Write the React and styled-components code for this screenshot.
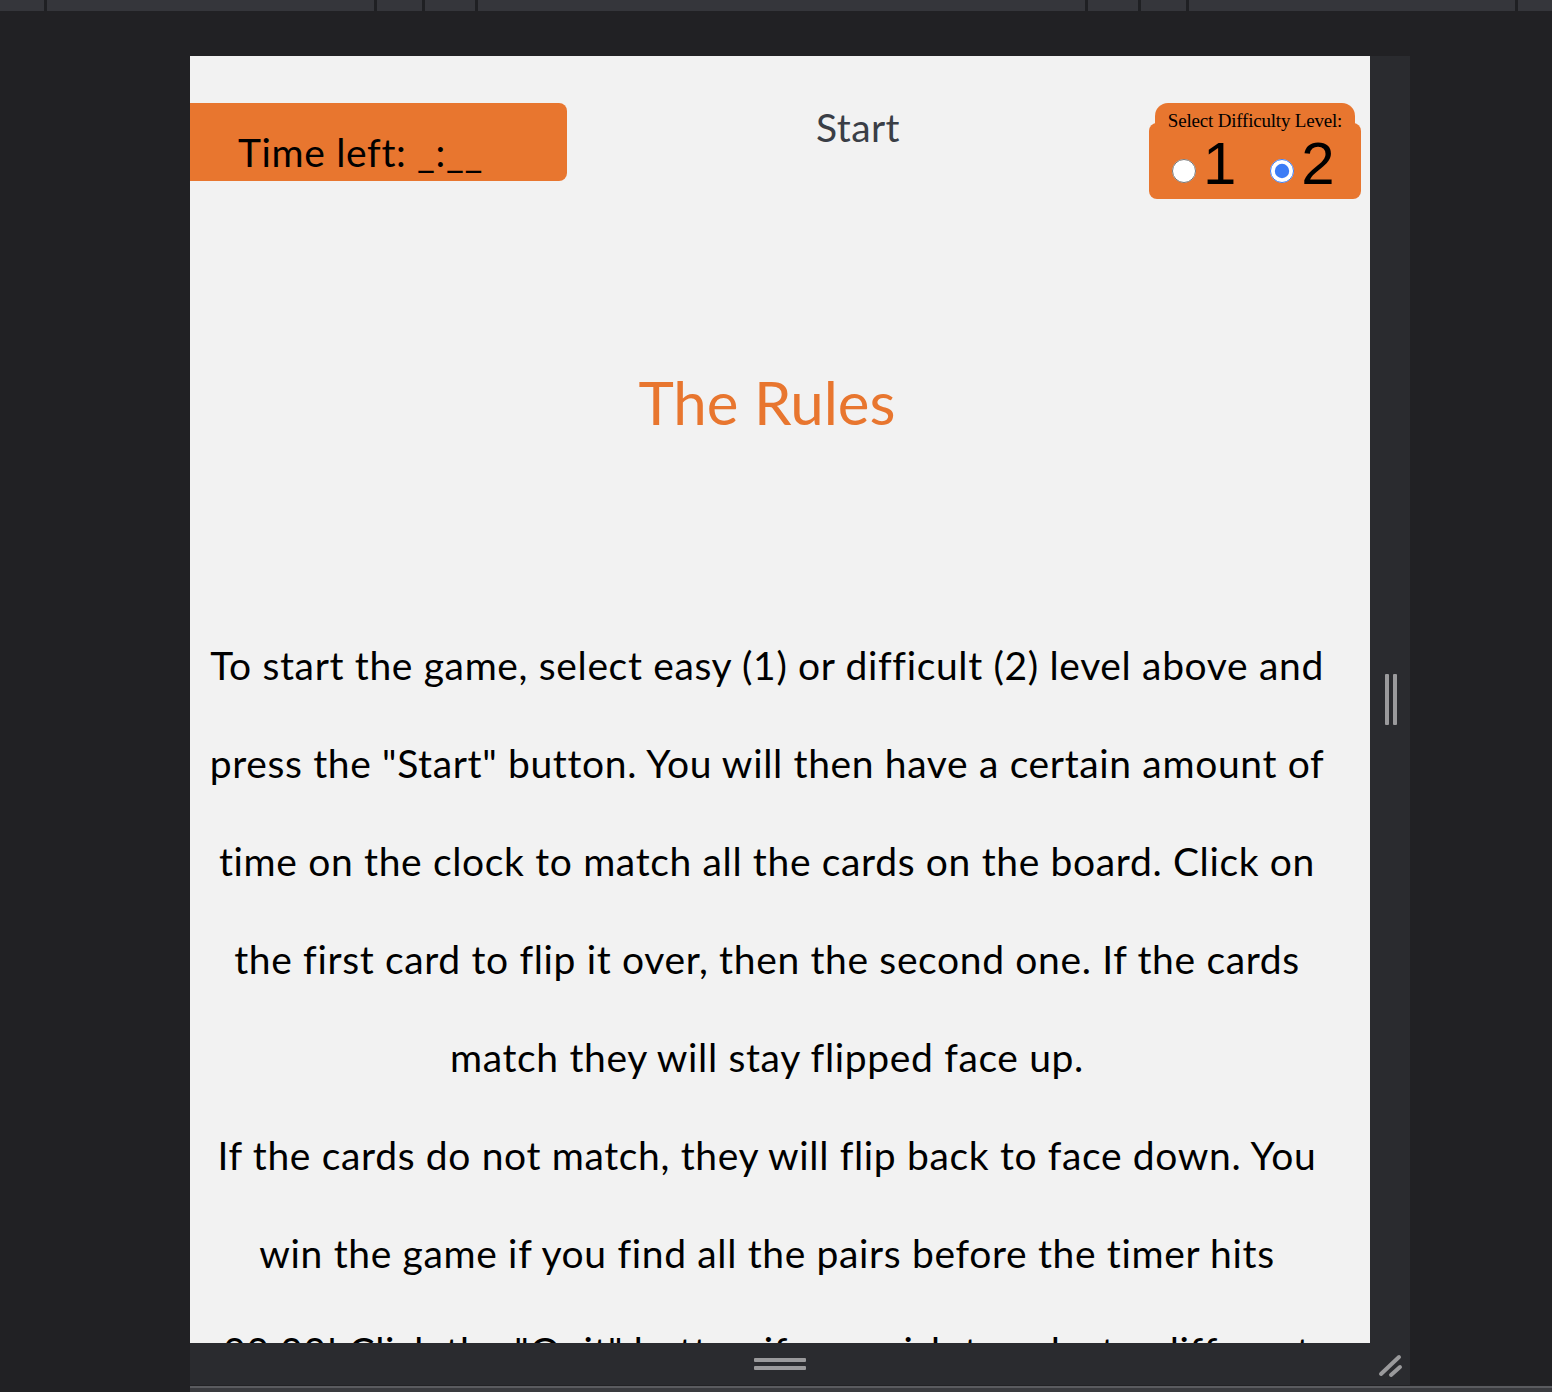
import React from "react";
import styled, { createGlobalStyle } from "styled-components";

const GlobalStyle = createGlobalStyle`
  html, body {
    margin: 0;
    padding: 0;
    background: #212124;
  }
  #root {
    min-height: 100vh;
  }
`;

const orange = "#e8762f";

const Screen = styled.div`
  width: 1552px;
  height: 1392px;
  background: #212124;
  display: flex;
  flex-direction: column;
  overflow: hidden;
`;

const TabStrip = styled.div`
  display: flex;
  height: 11px;
  background: #35363b;
  flex-shrink: 0;
`;

const Tab = styled.div`
  width: ${(p) => p.$w}px;
  height: 100%;
  border-right: 3px solid #1f2023;
  box-sizing: border-box;
  flex-shrink: 0;
`;

const Stage = styled.div`
  flex: 1;
  display: flex;
  flex-direction: column;
  padding: 45px 0 0 190px;
`;

const Frame = styled.div`
  width: 1220px;
  height: 1329px;
  display: flex;
  flex-direction: column;
  background: #2a2b2f;
`;

const FrameBody = styled.div`
  flex: 1;
  display: flex;
  min-height: 0;
`;

const Viewport = styled.div`
  width: 1180px;
  background: #f2f2f2;
  overflow: hidden;
  font-family: Lato, "Open Sans", sans-serif;
  color: #000;
`;

const Rail = styled.div`
  flex: 1;
  display: flex;
  justify-content: center;
  align-items: center;
  gap: 4px;
  padding-left: 2px;
`;

const RailGrip = styled.span`
  width: 4px;
  height: 51px;
  border-radius: 1px;
  background: #9a9a9c;
`;

const BottomBar = styled.div`
  height: 42px;
  flex-shrink: 0;
  position: relative;
  display: flex;
  flex-direction: column;
  align-items: center;
  justify-content: center;
  gap: 4px;
  padding-right: 40px;
`;

const BarGrip = styled.span`
  width: 52px;
  height: 4px;
  border-radius: 1px;
  background: #9a9a9c;
`;

const ResizeCorner = styled.svg`
  position: absolute;
  right: 6px;
  bottom: 7px;
`;

const BottomEdge = styled.div`
  height: 7px;
  border-top: 1px solid #222225;
  background: #3a3b3f;
  box-shadow: inset 0 2px 0 #5a5b5f;
`;

const Header = styled.header`
  display: flex;
  justify-content: space-between;
  align-items: flex-start;
  margin-top: 47px;
  padding-right: 9px;
`;

const Timer = styled.div`
  width: 377px;
  height: 78px;
  box-sizing: border-box;
  padding: 20px 0 0 48px;
  display: flex;
  align-items: center;
  background: ${orange};
  border-radius: 0 8px 8px 0;
  font-size: 39px;
  letter-spacing: 0.65px;
  color: #000;
`;

const StartButton = styled.button`
  background: transparent;
  border: none;
  padding: 0;
  margin-top: 1px;
  font-family: Lato, "Open Sans", sans-serif;
  font-size: 39px;
  letter-spacing: 0.4px;
  color: #3a3e46;
  cursor: pointer;
`;

const Difficulty = styled.div`
  width: 212px;
  display: flex;
  flex-direction: column;
  align-items: center;
`;

const DifficultyLabel = styled.div`
  position: relative;
  z-index: 1;
  width: 200px;
  height: 27px;
  box-sizing: border-box;
  padding-top: 8px;
  background: ${orange};
  border-radius: 13px 13px 0 0;
  font-family: "Liberation Serif", serif;
  font-size: 19px;
  letter-spacing: -0.2px;
  line-height: 19px;
  text-align: center;
  white-space: nowrap;
  color: #000;
`;

const DifficultyBox = styled.div`
  width: 100%;
  height: 76px;
  margin-top: -7px;
  box-sizing: border-box;
  padding: 6px 0 0 23px;
  background: ${orange};
  border-radius: 8px;
  display: flex;
  align-items: center;
  gap: 34px;
`;

const Option = styled.label`
  display: flex;
  align-items: center;
  font-family: "Liberation Sans", Arial, sans-serif;
  font-size: 60px;
  line-height: 1;
  color: #000;
`;

const Radio = styled.input`
  width: 24px;
  height: 24px;
  margin: 14px 7px 0 0;
  accent-color: #3b7cf6;
`;

const RulesTitle = styled.h1`
  margin: 167px 0 0;
  padding-right: 26px;
  font-size: 60px;
  line-height: 72px;
  font-weight: 400;
  text-align: center;
  color: ${orange};
`;

const Rules = styled.div`
  margin-top: 178px;
  padding: 0 44px 0 18px;
`;

const RuleText = styled.p`
  margin: 0;
  font-size: 39px;
  letter-spacing: 0.65px;
  line-height: 98px;
  text-align: center;
`;

const tabs = [47, 330, 48, 53, 610, 53, 48, 329];

export default function App() {
  return (
    <>
      <GlobalStyle />
      <Screen>
        <TabStrip>
          {tabs.map((w, i) => (
            <Tab key={i} $w={w} />
          ))}
        </TabStrip>
        <Stage>
          <Frame>
            <FrameBody>
              <Viewport>
                <Header>
                  <Timer>Time left: _:__</Timer>
                  <StartButton>Start</StartButton>
                  <Difficulty>
                    <DifficultyLabel>Select Difficulty Level:</DifficultyLabel>
                    <DifficultyBox>
                      <Option>
                        <Radio type="radio" name="level" value="1" />1
                      </Option>
                      <Option>
                        <Radio type="radio" name="level" value="2" defaultChecked />2
                      </Option>
                    </DifficultyBox>
                  </Difficulty>
                </Header>
                <RulesTitle>The Rules</RulesTitle>
                <Rules>
                  <RuleText>
                    To start the game, select easy (1) or difficult (2) level above and
                    press the "Start" button. You will then have a certain amount of
                    time on the clock to match all the cards on the board. Click on the
                    first card to flip it over, then the second one. If the cards match
                    they will stay flipped face up.
                  </RuleText>
                  <RuleText>
                    If the cards do not match, they will flip back to face down. You win
                    the game if you find all the pairs before the timer hits 00:00! Click
                    the "Quit" button if you wish to select a different level.
                  </RuleText>
                </Rules>
              </Viewport>
              <Rail>
                <RailGrip />
                <RailGrip />
              </Rail>
            </FrameBody>
            <BottomBar>
              <BarGrip />
              <BarGrip />
              <ResizeCorner width="26" height="26" viewBox="0 0 26 26">
                <path d="M3 22 L21 5 M13 23 L22 15" stroke="#9a9a9c" strokeWidth="4" strokeLinecap="round" fill="none" />
              </ResizeCorner>
            </BottomBar>
          </Frame>
          <BottomEdge />
        </Stage>
      </Screen>
    </>
  );
}
